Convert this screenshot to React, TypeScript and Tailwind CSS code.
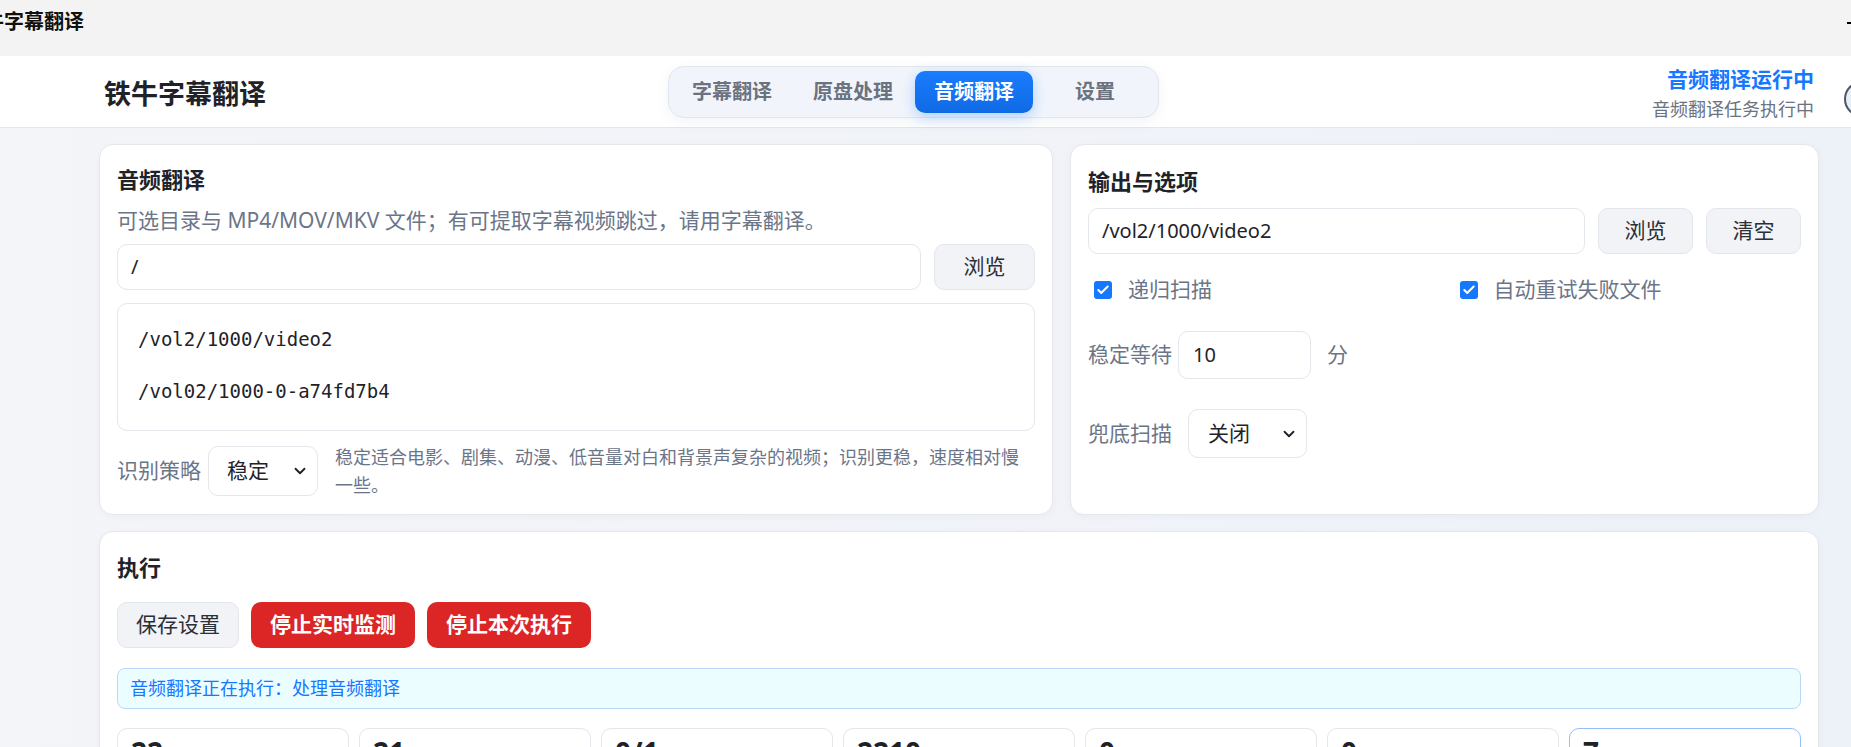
import { Check, ChevronDown } from 'lucide-react'

const font = { fontFamily: '"Noto Sans", "Noto Sans CJK SC", sans-serif' }

const tabs = ['字幕翻译', '原盘处理', '音频翻译', '设置']
const stats = ['22', '21', '0/1', '2210', '0', '0', '7']

const CheckBox = ({ label }: { label: string }) => (
  <div className="flex items-center h-[28px]">
    <span className="ml-[6px] w-[18px] h-[18px] rounded-[3px] bg-[#1677ff] flex items-center justify-center">
      <Check size={14} strokeWidth={3.5} color="#fff" />
    </span>
    <span className="ml-[16px] text-[21px] text-[#6b7588]">{label}</span>
  </div>
)

const App = () => {
  return (
    <div className="w-screen h-screen overflow-hidden bg-[#f3f5f9]" style={font}>
      <div className="w-[1920px]">
        {/* window title bar */}
        <div className="h-[56px] bg-[#f3f3f3] flex items-start justify-between">
          <div className="ml-[-36px] pt-[8px] text-[20px] leading-[28px] font-bold text-[#111]">铁牛字幕翻译</div>
          <span className="mt-[22px] mr-[61px] w-[12px] h-[1.5px] bg-black"></span>
        </div>

        {/* header */}
        <div className="h-[72px] bg-white border-b border-[#e3e6ea] flex items-center pl-[104px] pr-[40px]">
          <h1 className="pt-[4px] text-[27px] leading-none font-bold text-[#1f2329]">铁牛字幕翻译</h1>
          <nav className="ml-[402px] flex gap-[3px] p-[4px] rounded-[16px] border border-[#e1e6ee] bg-[#f1f5fb] shadow-[0_4px_14px_rgba(30,60,120,0.06)]">
            {tabs.map((t) => (
              <button
                key={t}
                className={
                  t === '音频翻译'
                    ? 'w-[118px] h-[42px] rounded-[10px] bg-gradient-to-b from-[#1b7cff] to-[#0f6ae4] text-white text-[20px] font-bold shadow-[0_4px_14px_rgba(22,119,255,0.3)]'
                    : 'w-[118px] h-[42px] rounded-[10px] text-[#6b7280] text-[20px] font-bold'
                }
              >
                {t}
              </button>
            ))}
          </nav>
          <div className="ml-auto self-start mt-[10px] flex flex-col items-end gap-[4px]">
            <div className="text-[21px] leading-[26px] font-bold text-[#1677ff]">音频翻译运行中</div>
            <div className="text-[18px] leading-[26px] text-[#6b7280]">音频翻译任务执行中</div>
          </div>
          <div className="ml-[30px] mt-[14px] w-[36px] h-[36px] rounded-full border-2 border-[#4b5563] bg-[#e8eef8]"></div>
        </div>

        {/* main */}
        <div className="bg-gradient-to-r from-[#f4f5f8] to-[#edf1f8] pt-[16px] pb-[40px]">
          <div className="ml-[99px] w-[1720px] flex flex-col gap-[16px]">
            <div className="grid grid-cols-[954px_1fr] gap-[17px]">
              {/* audio card */}
              <section className="bg-white rounded-[14px] border border-[#e5e7eb] shadow-[0_2px_8px_rgba(0,0,0,0.03)] px-[17px] pt-[19px] pb-[15px]">
                <h2 className="text-[22px] leading-[30px] font-bold text-[#1f2329]">音频翻译</h2>
                <p className="mt-[12px] text-[21px] leading-[28px] text-[#6b7588]">
                  可选目录与 MP4/MOV/MKV 文件；有可提取字幕视频跳过，请用字幕翻译。
                </p>
                <div className="mt-[10px] flex gap-[13px]">
                  <div className="flex-1 h-[46px] rounded-[10px] border border-[#e3e6eb] flex items-center px-[13px] text-[20px] text-[#1f2329]">/</div>
                  <button className="w-[101px] h-[46px] rounded-[10px] border border-[#e3e6eb] bg-[#f1f3f7] text-[21px] text-[#2b2f36]">浏览</button>
                </div>
                <div
                  className="mt-[13px] h-[128px] rounded-[10px] border border-[#e3e6eb] px-[20px] pt-[22px] text-[19px] leading-[26px] text-[#1f2329]"
                  style={{ fontFamily: '"DejaVu Sans Mono", "Liberation Mono", monospace' }}
                >
                  <div>/vol2/1000/video2</div>
                  <div className="h-[26px]"></div>
                  <div>/vol02/1000-0-a74fd7b4</div>
                </div>
                <div className="mt-[12px] flex items-center">
                  <span className="text-[21px] text-[#6b7588]">识别策略</span>
                  <div className="ml-[7px] w-[110px] h-[50px] rounded-[10px] border border-[#e3e6eb] flex items-center justify-between pl-[18px] pr-[8px] text-[21px] text-[#1f2329]">
                    稳定
                    <ChevronDown size={18} strokeWidth={2.5} color="#1f2329" />
                  </div>
                  <p className="ml-[17px] flex-1 text-[18px] leading-[28px] text-[#6b7588]">
                    稳定适合电影、剧集、动漫、低音量对白和背景声复杂的视频；识别更稳，速度相对慢一些。
                  </p>
                </div>
              </section>

              {/* output card */}
              <section className="bg-white rounded-[14px] border border-[#e5e7eb] shadow-[0_2px_8px_rgba(0,0,0,0.03)] px-[17px] pt-[21px] pb-[15px]">
                <h2 className="text-[22px] leading-[30px] font-bold text-[#1f2329]">输出与选项</h2>
                <div className="mt-[12px] flex gap-[13px]">
                  <div className="flex-1 h-[46px] rounded-[10px] border border-[#e3e6eb] flex items-center px-[13px] text-[20px] text-[#1f2329]">/vol2/1000/video2</div>
                  <button className="w-[95px] h-[46px] rounded-[10px] border border-[#e3e6eb] bg-[#f1f3f7] text-[21px] text-[#2b2f36]">浏览</button>
                  <button className="w-[95px] h-[46px] rounded-[10px] border border-[#e3e6eb] bg-[#f1f3f7] text-[21px] text-[#2b2f36]">清空</button>
                </div>
                <div className="mt-[22px] grid grid-cols-2 gap-[18px]">
                  <CheckBox label="递归扫描" />
                  <CheckBox label="自动重试失败文件" />
                </div>
                <div className="mt-[27px] flex items-center">
                  <span className="text-[21px] text-[#6b7588]">稳定等待</span>
                  <div className="ml-[6px] w-[133px] h-[48px] rounded-[10px] border border-[#e3e6eb] flex items-center px-[14px] text-[20px] text-[#1f2329]">10</div>
                  <span className="ml-[16px] text-[21px] text-[#6b7588]">分</span>
                </div>
                <div className="mt-[30px] flex items-center">
                  <span className="text-[21px] text-[#6b7588]">兜底扫描</span>
                  <div className="ml-[16px] w-[119px] h-[49px] rounded-[10px] border border-[#e3e6eb] flex items-center justify-between pl-[19px] pr-[8px] text-[21px] text-[#1f2329]">
                    关闭
                    <ChevronDown size={18} strokeWidth={2.5} color="#1f2329" />
                  </div>
                </div>
              </section>
            </div>

            {/* run card */}
            <section className="bg-white rounded-[14px] border border-[#e5e7eb] shadow-[0_2px_8px_rgba(0,0,0,0.03)] px-[17px] pt-[20px] pb-[20px]">
              <h2 className="text-[22px] leading-[30px] font-bold text-[#1f2329]">执行</h2>
              <div className="mt-[20px] flex gap-[12px]">
                <button className="h-[46px] px-[18px] rounded-[10px] border border-[#e3e6eb] bg-[#f1f3f7] text-[21px] text-[#2b2f36]">保存设置</button>
                <button className="h-[46px] px-[19px] rounded-[10px] bg-[#dc2626] text-[21px] font-bold text-white">停止实时监测</button>
                <button className="h-[46px] px-[19px] rounded-[10px] bg-[#dc2626] text-[21px] font-bold text-white">停止本次执行</button>
              </div>
              <div className="mt-[20px] h-[41px] rounded-[8px] border border-[#b9d8f7] bg-[#ebfdff] flex items-center px-[12px] text-[18px] text-[#1677ff]">
                音频翻译正在执行：处理音频翻译
              </div>
              <div className="mt-[19px] grid grid-cols-7 gap-[10px]">
                {stats.map((s, i) => (
                  <div
                    key={i}
                    className={
                      i === 6
                        ? 'h-[100px] rounded-[10px] border border-[#93c0fb] px-[13px] pt-[9px]'
                        : 'h-[100px] rounded-[10px] border border-[#e3e6eb] px-[13px] pt-[9px]'
                    }
                  >
                    <div className="text-[28px] leading-none font-bold text-[#1f2329]">{s}</div>
                  </div>
                ))}
              </div>
            </section>
          </div>
        </div>
      </div>
    </div>
  )
}

export default App
